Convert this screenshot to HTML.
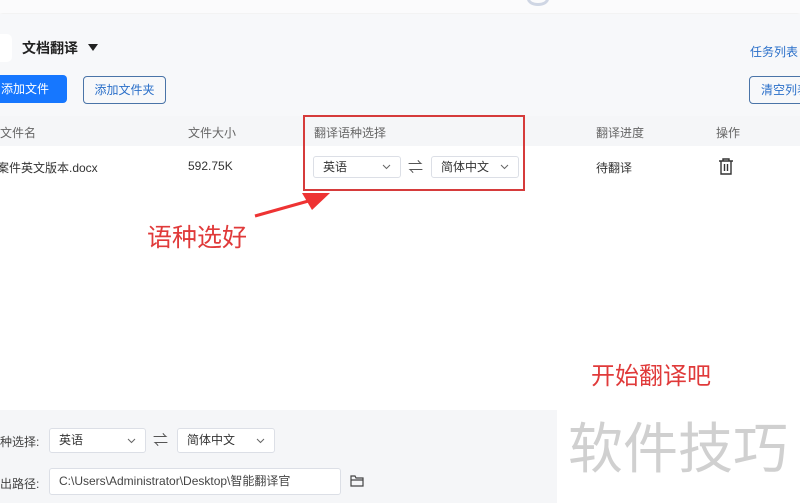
<!DOCTYPE html>
<html><head><meta charset="utf-8"><style>
*{margin:0;padding:0;box-sizing:border-box}
body{width:800px;height:503px;overflow:hidden;background:#fff;font-family:"Liberation Sans","Noto Sans CJK SC",sans-serif;position:relative;color:#333}
.a{position:absolute}
.sel{position:absolute;background:#fff;border:1px solid #dcdfe6;border-radius:3px;font-size:12px;color:#333;padding-left:9px;line-height:20px}
.sel svg{position:absolute;right:9px;top:50%;margin-top:-3px}
</style></head><body>
<div class="a" style="left:0;top:0;width:800px;height:13px;background:#fbfbfc;box-shadow:0 1px 3px rgba(0,0,0,.08)"></div>
<div class="a" style="left:527px;top:-8px;width:22px;height:14px;border:3px solid #cfd6e4;border-radius:50%"></div>
<div class="a" style="left:0;top:14px;width:800px;height:102px;background:#f7f8fa"></div>
<div class="a" style="left:-10px;top:34px;width:22px;height:28px;background:#fff;border-radius:5px"></div>
<div class="a" style="left:22px;top:38px;font-size:14px;font-weight:bold;color:#222">文档翻译</div>
<div class="a" style="left:88px;top:44px;width:0;height:0;border-left:5px solid transparent;border-right:5px solid transparent;border-top:7px solid #222"></div>
<div class="a" style="left:750px;top:43px;font-size:12px;color:#2a6fc9">任务列表</div>
<div class="a" style="left:-10px;top:75px;width:77px;height:28px;background:#1677ff;border-radius:4px;color:#fff;font-size:12px;line-height:28px;padding-left:11px">添加文件</div>
<div class="a" style="left:83px;top:76px;width:83px;height:28px;border:1px solid #4a74a8;border-radius:4px;color:#2a6fc9;font-size:12px;line-height:26px;text-align:center">添加文件夹</div>
<div class="a" style="left:749px;top:76px;width:60px;height:28px;border:1px solid #4a74a8;border-radius:4px;color:#2a6fc9;font-size:12px;line-height:26px;padding-left:11px;white-space:nowrap">清空列表</div>
<div class="a" style="left:0;top:116px;width:800px;height:30px;background:#f5f6f8"></div>
<div class="a" style="left:0;top:124px;font-size:12px;color:#666">文件名</div>
<div class="a" style="left:188px;top:124px;font-size:12px;color:#666">文件大小</div>
<div class="a" style="left:314px;top:124px;font-size:12px;color:#666">翻译语种选择</div>
<div class="a" style="left:596px;top:124px;font-size:12px;color:#666">翻译进度</div>
<div class="a" style="left:716px;top:124px;font-size:12px;color:#666">操作</div>
<div class="a" style="left:-3px;top:159px;font-size:12px;color:#333">案件英文版本.docx</div>
<div class="a" style="left:188px;top:159px;font-size:12px;color:#333">592.75K</div>
<div class="sel" style="left:313px;top:156px;width:88px;height:22px">英语<svg width="9" height="6"><path d="M1 1l3.5 3.5L8 1" stroke="#666" fill="none"/></svg></div>
<div class="a" style="left:408px;top:156px;font-size:15px;color:#555">⇌</div>
<div class="sel" style="left:431px;top:156px;width:88px;height:22px">简体中文<svg width="9" height="6"><path d="M1 1l3.5 3.5L8 1" stroke="#666" fill="none"/></svg></div>
<div class="a" style="left:596px;top:159px;font-size:12px;color:#333">待翻译</div>
<svg class="a" style="left:718px;top:158px" width="16" height="18" viewBox="0 0 16 18"><path d="M1 3h14M5 3V1h6v2M3 3v13h10V3M6.5 6v7M9.5 6v7" stroke="#333" stroke-width="1.4" fill="none"/></svg>
<div class="a" style="left:303px;top:115px;width:222px;height:76px;border:2px solid #d63b3b"></div>
<svg class="a" style="left:250px;top:190px" width="85" height="30"><path d="M5 26 L62 10" stroke="#e33" stroke-width="3"/><path d="M52 3 L80 3 L62 20 Z" fill="#e33"/></svg>
<div class="a" style="left:147px;top:218px;font-size:25px;color:#e03a3a">语种选好</div>
<div class="a" style="left:591px;top:356px;font-size:24px;color:#e03a3a;white-space:nowrap">开始翻译吧</div>
<div class="a" style="left:0;top:410px;width:557px;height:93px;background:#f5f6f8"></div>
<div class="a" style="left:0;top:433px;font-size:12px;color:#444">种选择:</div>
<div class="sel" style="left:49px;top:428px;width:97px;height:25px;line-height:23px">英语<svg width="9" height="6"><path d="M1 1l3.5 3.5L8 1" stroke="#666" fill="none"/></svg></div>
<div class="a" style="left:153px;top:429px;font-size:15px;color:#555">⇌</div>
<div class="sel" style="left:177px;top:428px;width:98px;height:25px;line-height:23px">简体中文<svg width="9" height="6"><path d="M1 1l3.5 3.5L8 1" stroke="#666" fill="none"/></svg></div>
<div class="a" style="left:0;top:475px;font-size:12px;color:#444">出路径:</div>
<div class="sel" style="left:49px;top:468px;width:292px;height:27px;line-height:25px;font-size:12px;color:#444">C:\Users\Administrator\Desktop\智能翻译官</div>
<svg class="a" style="left:350px;top:475px" width="14" height="12"><path d="M1 1h4l1 2h7v8H1Z M1 5h12" stroke="#444" stroke-width="1.2" fill="none"/></svg>
<div class="a" style="left:568px;top:404px;font-size:55px;color:#d0d0d0;white-space:nowrap">软件技巧</div>
</body></html>
